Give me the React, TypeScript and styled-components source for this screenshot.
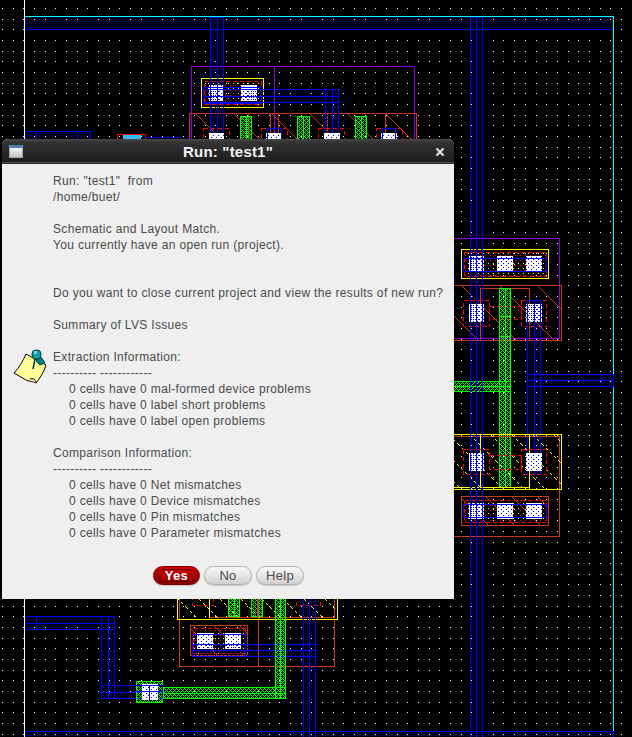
import React from "react";
import styled, { createGlobalStyle } from "styled-components";

const GlobalStyle = createGlobalStyle`
    html, body {
        margin: 0;
        padding: 0;
        background: #000;
    }
`;

const Page = styled.div`
    position: relative;
    width: 632px;
    height: 737px;
    overflow: hidden;
    background: #000;
`;

const Canvas = styled.svg`
    display: block;
    width: 632px;
    height: 737px;
`;

const Dialog = styled.div`
    position: absolute;
    left: 2px;
    top: 139px;
    width: 452px;
    height: 460px;
    display: flex;
    flex-direction: column;
    background: #efefef;
    border-radius: 6px 6px 0 0;
    overflow: hidden;
`;

const TitleBar = styled.div`
    position: relative;
    flex: none;
    height: 25px;
    box-sizing: border-box;
    display: flex;
    align-items: center;
    padding: 0 7px;
    background: linear-gradient(#4a4a4a 0, #343434 3px, #1f1f1f 21px, #1f1f1f 23px, #5f7488 23px, #2c2c2c 24px);
`;

const WindowIcon = styled.div`
    width: 14px;
    height: 13px;
    box-sizing: border-box;
    border: 1px solid #9ab;
    border-top: 3px solid #4f7cb4;
    background: linear-gradient(#f4f4f4, #c4c4c4);
`;

const Title = styled.div`
    flex: 1;
    text-align: center;
    color: #f2f2f2;
    font: bold 15px "Liberation Sans", Arial, sans-serif;
    letter-spacing: 0.2px;
    padding-right: 2px;
`;

const CloseButton = styled.div`
    width: 10px;
    height: 10px;
    margin-right: 2px;
    color: #d8d8d8;
    svg {
        display: block;
    }
`;

const Body = styled.div`
    flex: 1;
    display: flex;
    flex-direction: column;
    box-sizing: border-box;
    margin: 0 1px;
    padding: 9px 0 0 50px;
    background: #efefef;
    position: relative;
`;

const Line = styled.div<{ $indent?: boolean }>`
    height: 16px;
    font: 12px/16px "Liberation Sans", Arial, sans-serif;
    letter-spacing: 0.34px;
    color: #4a4a4a;
    white-space: pre;
    padding-left: ${p => (p.$indent ? "16px" : "0")};
`;

const NoteIcon = styled.svg`
    position: absolute;
    left: 10px;
    top: 184px;
`;

const ButtonRow = styled.div`
    display: flex;
    gap: 4px;
    margin: 25px 0 0 100px;
`;

const Button = styled.div<{ $primary?: boolean }>`
    position: relative;
    width: ${p => (p.$primary ? "47px" : "48px")};
    height: 19px;
    box-sizing: border-box;
    border-radius: 10px;
    display: flex;
    align-items: center;
    justify-content: center;
    font: ${p => (p.$primary ? "bold 13px" : "13px")} "Liberation Sans", Arial, sans-serif;
    letter-spacing: 0.3px;
    color: ${p => (p.$primary ? "#fff" : "#4c4c4c")};
    border: 1px solid ${p => (p.$primary ? "#7a0000" : "#b4b4b4")};
    box-shadow: 0 1px 1px #c4c4c4;
    background: ${p =>
        p.$primary
            ? "linear-gradient(#d40000, #a80000 55%, #8e0000)"
            : "linear-gradient(#f7f7f7, #e6e6e6 50%, #cfcfcf)"};
    ${p =>
        p.$primary &&
        `
        &::after {
            content: "";
            position: absolute;
            inset: 2px 3px;
            border: 1px dotted #000;
            border-radius: 7px;
        }
    `}
`;

const BLUE = "#0000ff";
const GREEN = "#00ff00";
const RED = "#ff0000";
const BROWN = "#c63a1e";
const PURPLE = "#9000e0";
const YELLOW = "#ffff00";
const CYAN = "#00ffff";

type R = [number, number, number, number];

// axis-aligned 1px line, drawn as a filled rect so it stays pixel exact
const seg = (x1: number, y1: number, x2: number, y2: number, color: string) => (
    <rect
        key={`${x1}-${y1}-${x2}-${y2}-${color}`}
        x={Math.min(x1, x2)}
        y={Math.min(y1, y2)}
        width={Math.abs(x2 - x1) + 1}
        height={Math.abs(y2 - y1) + 1}
        fill={color}
    />
);

const box = ([x1, y1, x2, y2]: R, stroke: string, fill = "none", dash?: string) => (
    <g key={`${x1}-${y1}-${x2}-${y2}-${stroke}-${fill}`}>
        {dash ? (
            <rect
                x={x1 + 0.5}
                y={y1 + 0.5}
                width={x2 - x1}
                height={y2 - y1}
                stroke={stroke}
                fill={fill}
                strokeDasharray={dash}
            />
        ) : (
            <>
                {fill !== "none" && <rect x={x1} y={y1} width={x2 - x1} height={y2 - y1} fill={fill} />}
                {seg(x1, y1, x2, y1, stroke)}
                {seg(x1, y2, x2, y2, stroke)}
                {seg(x1, y1, x1, y2, stroke)}
                {seg(x2, y1, x2, y2, stroke)}
            </>
        )}
    </g>
);

// vertical wire: outline, stipple and centre line
const vWire = (x1: number, y1: number, x2: number, y2: number, color = BLUE) => (
    <g key={`v${x1}-${y1}`}>
        {box([x1, y1, x2, y2], color, color === BLUE ? "url(#blueFill)" : "url(#greenFill)")}
        {seg(Math.round((x1 + x2) / 2), y1, Math.round((x1 + x2) / 2), y2, color)}
    </g>
);

const hWire = (x1: number, y1: number, x2: number, y2: number, color = BLUE) => (
    <g key={`h${x1}-${y1}`}>
        {box([x1, y1, x2, y2], color, color === BLUE ? "url(#blueFill)" : "url(#greenFill)")}
        {seg(x1, Math.round((y1 + y2) / 2), x2, Math.round((y1 + y2) / 2), color)}
    </g>
);

const contact = (x1: number, y1: number, x2: number, y2: number) => (
    <g key={`c${x1}-${y1}`}>
        <rect x={x1} y={y1} width={x2 - x1} height={y2 - y1} fill="url(#contactFill)" />
        {seg(x1, y1 - 1, x2 - 1, y1 - 1, "#fff")}
        {seg(x1, y2, x2 - 1, y2, "#fff")}
    </g>
);

// diagonal hatch clipped to a rectangle
const hatch = ([x1, y1, x2, y2]: R, color: string, step: number, dash?: string) => {
    const lines = [];
    const h = y2 - y1;
    for (let x = x1 - h; x < x2; x += step) {
        const sx = Math.max(x, x1);
        const ex = Math.min(x + h, x2);
        lines.push(
            <line
                key={`${color}-${x1}-${y1}-${x}`}
                x1={sx}
                y1={y1 + (sx - x)}
                x2={ex}
                y2={y1 + (ex - x)}
                stroke={color}
                strokeDasharray={dash}
            />
        );
    }
    return lines;
};

const gridDots = () => {
    const dots = [];
    for (let i = 0; i < 60; i++) {
        for (let j = 0; j < 70; j++) {
            const x = Math.round(2 + i * 10.67);
            const y = Math.round(8 + j * 10.67);
            dots.push(<rect key={`${i}-${j}`} x={x} y={y} width={1} height={1} fill="#fff" />);
        }
    }
    return dots;
};

const Layout: React.FC = () => (
    <Canvas viewBox="0 0 632 737" shapeRendering="crispEdges">
        <defs>
            <pattern id="blueFill" width="4" height="4" patternUnits="userSpaceOnUse">
                <rect x="1" y="1" width="1" height="1" fill="#0000c0" />
                <rect x="3" y="3" width="1" height="1" fill="#0000c0" />
            </pattern>
            <pattern id="greenFill" width="4" height="4" patternUnits="userSpaceOnUse">
                <rect x="0" y="0" width="1" height="1" fill={GREEN} />
                <rect x="1" y="1" width="1" height="1" fill={GREEN} />
                <rect x="3" y="1" width="1" height="1" fill={GREEN} />
                <rect x="2" y="2" width="1" height="1" fill={GREEN} />
                <rect x="1" y="3" width="1" height="1" fill={GREEN} />
                <rect x="3" y="3" width="1" height="1" fill={GREEN} />
            </pattern>
            <pattern id="contactFill" width="5" height="4" patternUnits="userSpaceOnUse">
                <rect width="5" height="4" fill="#fff" />
                <rect x="1" y="1" width="1" height="1" fill={BLUE} />
                <rect x="3" y="3" width="1" height="1" fill={BLUE} />
            </pattern>
            <pattern id="purpleFill" width="16" height="16" patternUnits="userSpaceOnUse">
                <rect x="6" y="6" width="1" height="1" fill={PURPLE} />
            </pattern>
            <pattern id="redFill" width="5" height="5" patternUnits="userSpaceOnUse">
                <rect x="0" y="0" width="1" height="1" fill={RED} />
                <rect x="3" y="3" width="1" height="1" fill={YELLOW} />
            </pattern>
            <pattern id="paperFill" width="2" height="2" patternUnits="userSpaceOnUse">
                <rect width="2" height="2" fill="#ffff80" />
                <rect width="1" height="1" fill="#fffff0" />
            </pattern>
        </defs>

        {gridDots()}

        {seg(24, 0, 24, 737, "#fff")}

        {/* rails */}
        {box([25, 16, 613, 29], BLUE, "url(#blueFill)")}
        {seg(25, 16, 613, 16, CYAN)}
        {seg(613, 16, 613, 737, CYAN)}
        {box([25, 731, 613, 740], BLUE, "url(#blueFill)")}

        {/* upper cell */}
        <rect x="192" y="67" width="222" height="46" fill="url(#purpleFill)" />
        {box([191, 66, 414, 140], PURPLE)}
        {seg(274, 66, 274, 140, PURPLE)}
        {box([189, 113, 416, 145], BROWN)}
        {hatch([189, 114, 416, 145], BROWN, 38)}
        {seg(248, 113, 248, 140, BROWN)}
        {seg(270, 113, 270, 140, BROWN)}
        {seg(278, 113, 278, 140, BROWN)}
        {seg(327, 113, 327, 140, BROWN)}
        {seg(385, 113, 385, 140, BROWN)}
        {box([203, 128, 229, 145], RED, "none", "4 3")}
        {box([261, 128, 287, 145], RED, "none", "4 3")}
        {box([318, 128, 344, 145], RED, "none", "4 3")}
        {box([376, 128, 402, 145], RED, "none", "4 3")}
        {vWire(240, 116, 251, 145, GREEN)}
        {vWire(297, 116, 309, 145, GREEN)}
        {vWire(355, 116, 366, 145, GREEN)}

        <rect x="204" y="81" width="57" height="24" fill="url(#redFill)" />
        {box([204, 81, 261, 104], RED, "none", "4 3")}
        {box([201, 78, 263, 107], YELLOW)}
        {contact(209, 86, 224, 100)}
        {contact(241, 86, 257, 100)}
        {box([203, 87, 261, 103], BLUE)}
        {hWire(203, 89, 338, 102)}
        {vWire(325, 89, 338, 145)}
        {vWire(210, 17, 223, 145)}
        {contact(209, 134, 224, 145)}
        {contact(266, 134, 282, 145)}
        {contact(324, 134, 340, 145)}
        {contact(381, 134, 397, 145)}
        {box([267, 128, 281, 145], BLUE)}
        {box([382, 128, 395, 145], BLUE)}

        {/* left stubs */}
        {box([25, 131, 90, 145], BLUE, "url(#blueFill)")}
        {seg(36, 131, 36, 145, BLUE)}
        {seg(77, 131, 77, 145, BLUE)}
        {box([117, 134, 145, 145], RED)}
        <rect x="123" y="135" width="18" height="6" fill="#35b8ff" />
        {seg(145, 137, 180, 137, BLUE)}

        {/* right upper cell */}
        <rect x="450" y="239" width="109" height="99" fill="url(#purpleFill)" />
        {box([440, 238, 559, 338], PURPLE)}
        {box([440, 285, 561, 340], BROWN)}
        {hatch([440, 286, 561, 340], BROWN, 38)}
        {seg(480, 288, 480, 340, BROWN)}
        {seg(480, 288, 529, 288, BROWN)}
        {seg(529, 288, 529, 340, BROWN)}
        {box([463, 300, 489, 326], RED, "none", "4 3")}
        {box([521, 300, 546, 326], RED, "none", "4 3")}
        {box([489, 306, 521, 319], RED, "none", "4 3")}

        <rect x="464" y="252" width="82" height="24" fill="url(#redFill)" />
        {box([464, 252, 546, 276], RED, "none", "4 3")}
        {box([461, 249, 548, 278], YELLOW)}
        {contact(469, 257, 484, 271)}
        {contact(497, 257, 513, 271)}
        {contact(526, 257, 542, 271)}
        {box([463, 258, 546, 271], BLUE)}

        {vWire(499, 288, 510, 487, GREEN)}
        {seg(499, 316, 510, 316, GREEN)}
        {seg(499, 336, 510, 336, GREEN)}
        {hWire(440, 381, 510, 391, GREEN)}

        {contact(469, 305, 484, 321)}
        {contact(526, 305, 542, 321)}

        {vWire(527, 300, 540, 474)}
        {hWire(527, 374, 613, 386)}
        {seg(601, 374, 601, 386, BLUE)}

        {/* right lower cell */}
        {box([440, 436, 559, 536], BROWN)}
        {box([440, 434, 561, 489], YELLOW)}
        {hatch([440, 435, 561, 489], YELLOW, 21, "3 3")}
        {seg(480, 434, 480, 487, YELLOW)}
        {seg(529, 434, 529, 489, YELLOW)}
        {seg(440, 487, 529, 487, YELLOW)}
        {box([463, 449, 489, 474], RED, "none", "4 3")}
        {box([521, 449, 546, 474], RED, "none", "4 3")}
        {box([489, 455, 521, 469], RED, "none", "4 3")}
        {contact(469, 454, 484, 470)}
        {contact(526, 454, 542, 470)}

        <rect x="464" y="500" width="82" height="23" fill="url(#redFill)" />
        {hatch([462, 497, 548, 525], BROWN, 26)}
        {box([464, 500, 546, 522], RED, "none", "4 3")}
        {box([461, 496, 548, 525], BROWN)}
        {contact(469, 504, 484, 518)}
        {contact(497, 504, 513, 518)}
        {contact(526, 504, 542, 518)}
        {box([463, 504, 546, 517], BLUE)}

        {vWire(470, 17, 482, 737)}

        {/* bottom cell */}
        {box([179, 590, 334, 666], BROWN)}
        {seg(258, 590, 258, 666, BROWN)}
        {seg(209, 617, 334, 617, BROWN)}
        {box([177, 590, 337, 619], YELLOW)}
        {hatch([177, 590, 337, 619], YELLOW, 21, "3 3")}
        {seg(209, 590, 209, 617, YELLOW)}
        {box([192, 590, 213, 605], RED, "none", "4 3")}
        {box([296, 590, 320, 605], RED, "none", "4 3")}
        {vWire(228, 590, 239, 616, GREEN)}
        {vWire(251, 590, 262, 616, GREEN)}
        {seg(257, 590, 257, 616, BROWN)}

        <rect x="192" y="629" width="55" height="26" fill="url(#redFill)" />
        {hatch([191, 626, 247, 655], BROWN, 26)}
        {box([193, 628, 245, 653], RED, "none", "4 3")}
        {box([190, 625, 247, 655], BROWN)}
        {contact(197, 634, 213, 648)}
        {contact(225, 634, 241, 648)}
        {box([192, 634, 245, 656], BLUE)}
        {hWire(192, 644, 315, 656)}
        {vWire(303, 590, 315, 737)}
        {vWire(275, 590, 285, 698, GREEN)}

        {/* routed wire with via */}
        {hWire(25, 616, 114, 629)}
        {seg(36, 616, 36, 629, BLUE)}
        {vWire(101, 616, 114, 698)}
        {hWire(101, 685, 162, 698)}
        {hWire(163, 687, 285, 698, GREEN)}
        {box([136, 681, 162, 702], GREEN, "url(#greenFill)")}
        {contact(142, 685, 158, 699)}
        {seg(149, 685, 149, 699, BLUE)}
        {seg(136, 685, 162, 685, BLUE)}
        {seg(136, 691, 162, 691, BLUE)}
        {seg(162, 685, 162, 698, BLUE)}
    </Canvas>
);

const Note: React.FC = () => (
    <NoteIcon width="34" height="36" viewBox="0 0 34 36">
        <path
            d="M13 6 L33 17 C31 24 27 30 23 35 C20 33 17 34 13 32 L1 25 C6 20 10 13 13 6 Z"
            fill="url(#paperFill)"
            stroke="#000"
            strokeWidth="1"
        />
        <path d="M23 35 C23 31 20 30 17 31" fill="#e8e8c0" stroke="#000" />
        <path d="M27 17 L23 13 L28 9 L32 15 Z" fill="#0c7f86" stroke="#044" />
        <rect x="19" y="2" width="9" height="9" rx="4" fill="#12a0a8" stroke="#044" />
        <rect x="21" y="3" width="3" height="3" fill="#6fd8dc" />
        <path d="M22 11 L20 21" stroke="#033" strokeWidth="1.5" />
    </NoteIcon>
);

const LINES: { text: string; indent?: boolean }[] = [
    { text: 'Run: "test1"  from' },
    { text: "/home/buet/" },
    { text: "" },
    { text: "Schematic and Layout Match." },
    { text: "You currently have an open run (project)." },
    { text: "" },
    { text: "" },
    { text: "Do you want to close current project and view the results of new run?" },
    { text: "" },
    { text: "Summary of LVS Issues" },
    { text: "" },
    { text: "Extraction Information:" },
    { text: "---------- ------------" },
    { text: "0 cells have 0 mal-formed device problems", indent: true },
    { text: "0 cells have 0 label short problems", indent: true },
    { text: "0 cells have 0 label open problems", indent: true },
    { text: "" },
    { text: "Comparison Information:" },
    { text: "---------- ------------" },
    { text: "0 cells have 0 Net mismatches", indent: true },
    { text: "0 cells have 0 Device mismatches", indent: true },
    { text: "0 cells have 0 Pin mismatches", indent: true },
    { text: "0 cells have 0 Parameter mismatches", indent: true },
];

export default function App() {
    return (
        <Page>
            <GlobalStyle />
            <Layout />
            <Dialog>
                <TitleBar>
                    <WindowIcon />
                    <Title>Run: "test1"</Title>
                    <CloseButton>
                        <svg width="10" height="10" viewBox="0 0 10 10">
                            <path d="M1.5 1.5 L8.5 8.5 M8.5 1.5 L1.5 8.5" stroke="currentColor" strokeWidth="2.4" />
                        </svg>
                    </CloseButton>
                </TitleBar>
                <Body>
                    <Note />
                    {LINES.map((l, i) => (
                        <Line key={i} $indent={l.indent}>
                            {l.text}
                        </Line>
                    ))}
                    <ButtonRow>
                        <Button $primary>Yes</Button>
                        <Button>No</Button>
                        <Button>Help</Button>
                    </ButtonRow>
                </Body>
            </Dialog>
        </Page>
    );
}
